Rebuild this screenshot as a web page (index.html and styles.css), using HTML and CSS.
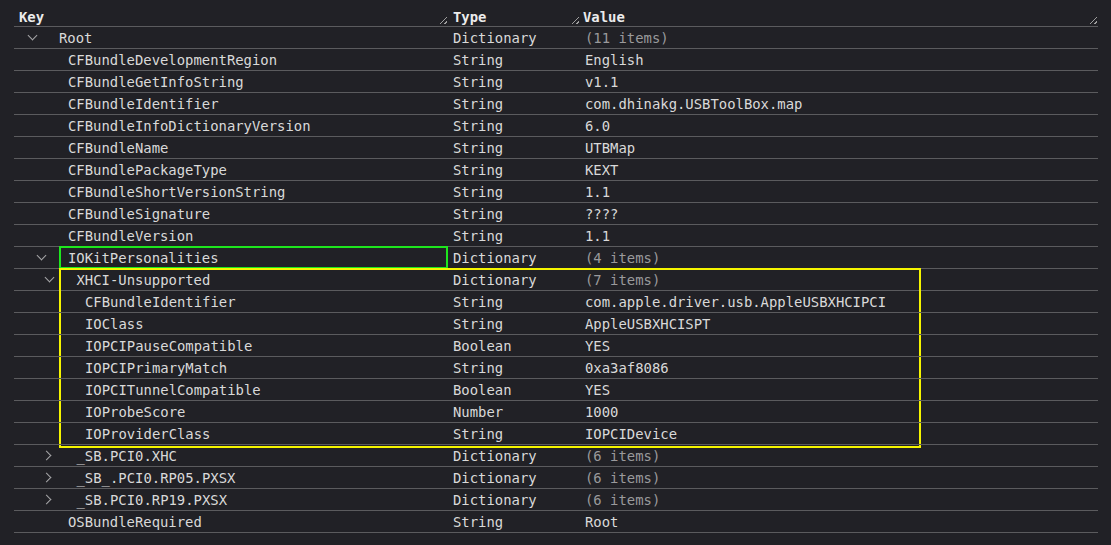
FILE: index.html
```html
<!DOCTYPE html>
<html>
<head>
<meta charset="utf-8">
<link rel="stylesheet" href="styles.css">
</head>
<body>
<div class="plist">
  <div class="hdr">
    <div class="c key">Key<span class="grip"></span></div>
    <div class="c type">Type<span class="grip"></span></div>
    <div class="c val">Value<span class="grip"></span></div>
  </div>

  <div class="row"><div class="c key l0"><span class="chev down"></span><span>Root</span></div><div class="c type">Dictionary</div><div class="c val dim">(11 items)</div></div>
  <div class="row"><div class="c key l1"><span>CFBundleDevelopmentRegion</span></div><div class="c type">String</div><div class="c val">English</div></div>
  <div class="row"><div class="c key l1"><span>CFBundleGetInfoString</span></div><div class="c type">String</div><div class="c val">v1.1</div></div>
  <div class="row"><div class="c key l1"><span>CFBundleIdentifier</span></div><div class="c type">String</div><div class="c val">com.dhinakg.USBToolBox.map</div></div>
  <div class="row"><div class="c key l1"><span>CFBundleInfoDictionaryVersion</span></div><div class="c type">String</div><div class="c val">6.0</div></div>
  <div class="row"><div class="c key l1"><span>CFBundleName</span></div><div class="c type">String</div><div class="c val">UTBMap</div></div>
  <div class="row"><div class="c key l1"><span>CFBundlePackageType</span></div><div class="c type">String</div><div class="c val">KEXT</div></div>
  <div class="row"><div class="c key l1"><span>CFBundleShortVersionString</span></div><div class="c type">String</div><div class="c val">1.1</div></div>
  <div class="row"><div class="c key l1"><span>CFBundleSignature</span></div><div class="c type">String</div><div class="c val">????</div></div>
  <div class="row"><div class="c key l1"><span>CFBundleVersion</span></div><div class="c type">String</div><div class="c val">1.1</div></div>
  <div class="row"><div class="c key l1 open"><span class="chev down"></span><span>IOKitPersonalities</span></div><div class="c type">Dictionary</div><div class="c val dim">(4 items)</div><div class="mark green"></div></div>
  <div class="row"><div class="c key l2 open"><span class="chev down"></span><span>XHCI-Unsupported</span></div><div class="c type">Dictionary</div><div class="c val dim">(7 items)</div><div class="mark yellow"></div></div>
  <div class="row"><div class="c key l3"><span>CFBundleIdentifier</span></div><div class="c type">String</div><div class="c val">com.apple.driver.usb.AppleUSBXHCIPCI</div></div>
  <div class="row"><div class="c key l3"><span>IOClass</span></div><div class="c type">String</div><div class="c val">AppleUSBXHCISPT</div></div>
  <div class="row"><div class="c key l3"><span>IOPCIPauseCompatible</span></div><div class="c type">Boolean</div><div class="c val">YES</div></div>
  <div class="row"><div class="c key l3"><span>IOPCIPrimaryMatch</span></div><div class="c type">String</div><div class="c val">0xa3af8086</div></div>
  <div class="row"><div class="c key l3"><span>IOPCITunnelCompatible</span></div><div class="c type">Boolean</div><div class="c val">YES</div></div>
  <div class="row"><div class="c key l3"><span>IOProbeScore</span></div><div class="c type">Number</div><div class="c val">1000</div></div>
  <div class="row"><div class="c key l3"><span>IOProviderClass</span></div><div class="c type">String</div><div class="c val">IOPCIDevice</div></div>
  <div class="row"><div class="c key l2 open"><span class="chev right"></span><span>_SB.PCI0.XHC</span></div><div class="c type">Dictionary</div><div class="c val dim">(6 items)</div></div>
  <div class="row"><div class="c key l2 open"><span class="chev right"></span><span>_SB_.PCI0.RP05.PXSX</span></div><div class="c type">Dictionary</div><div class="c val dim">(6 items)</div></div>
  <div class="row"><div class="c key l2 open"><span class="chev right"></span><span>_SB.PCI0.RP19.PXSX</span></div><div class="c type">Dictionary</div><div class="c val dim">(6 items)</div></div>
  <div class="row"><div class="c key l1"><span>OSBundleRequired</span></div><div class="c type">String</div><div class="c val">Root</div></div>
</div>
</body>
</html>
```

FILE: styles.css
```css
html, body {
  margin: 0;
  padding: 0;
  background: #212126;
  height: 100%;
}
body {
  font-family: "DejaVu Sans Mono", "Liberation Mono", monospace;
  font-size: 13.9px;
  color: #d9d9d9;
  overflow: hidden;
}
.plist {
  margin-left: 14px;
  width: 1084px;
}
.hdr, .row {
  display: flex;
  position: relative;
  border-bottom: 1px solid #5b5b5e;
}
.hdr {
  height: 26px;
  font-weight: bold;
  color: #ececec;
}
.row {
  height: 21px;
}
.c {
  position: relative;
  display: flex;
  align-items: center;
  white-space: nowrap;
}
.hdr .c {
  align-items: flex-end;
  padding-bottom: 1px;
  box-sizing: border-box;
}
.key {
  width: 434px;
  padding-left: 5px;
  box-sizing: border-box;
}
.type {
  width: 132px;
  padding-left: 5px;
  box-sizing: border-box;
}
.val {
  flex: 1;
  padding-left: 5px;
  box-sizing: border-box;
}
.hdr .val { padding-left: 3px; }
.row .val { padding-left: 5px; }
.dim { color: #9a9a9c; }

.row .key.l0 { padding-left: 10px; }
.row .key.l1 { padding-left: 54px; }
.row .key.l1.open { padding-left: 18.5px; }
.row .key.l2.open { padding-left: 27px; }
.row .key.l3 { padding-left: 71px; }

.chev {
  width: 18px;
  height: 21px;
  margin-right: 17px;
  position: relative;
  flex: none;
}
.chev::before {
  content: "";
  position: absolute;
  width: 6px;
  height: 6px;
  border-right: 1px solid #a6a6a8;
  border-bottom: 1px solid #a6a6a8;
}
.chev.down::before {
  left: 5px;
  top: 5px;
  transform: rotate(45deg);
}
.chev.right::before {
  left: 2px;
  top: 7px;
  transform: rotate(-45deg);
}
.row .key.l1.open .chev,
.row .key.l2.open .chev { margin-right: 17.5px; }

.grip {
  position: absolute;
  right: 1px;
  bottom: 2px;
  width: 7px;
  height: 7px;
  background:
    linear-gradient(135deg, transparent 44%, #b4b4b4 44%, #b4b4b4 56%, transparent 56%),
    linear-gradient(135deg, transparent 76%, #b4b4b4 76%, #b4b4b4 88%, transparent 88%);
  opacity: 0.85;
}

.mark {
  position: absolute;
  box-sizing: border-box;
  pointer-events: none;
}
.green {
  left: 45px;
  top: -1px;
  width: 389px;
  height: 23px;
  border: 2px solid #1ee61e;
}
.yellow {
  left: 45px;
  top: -1px;
  width: 862px;
  height: 180px;
  border: 2px solid #f5f500;
}
```
